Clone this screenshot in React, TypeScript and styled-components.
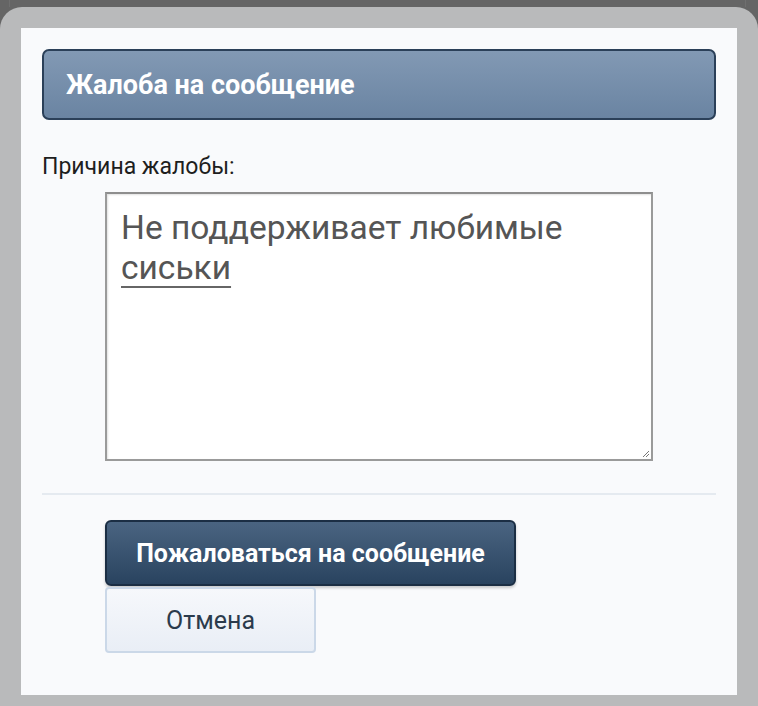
import { createGlobalStyle } from "styled-components";
import styled from "styled-components";

const Global = createGlobalStyle`
  html, body {
    margin: 0;
    padding: 0;
    background: #656565;
    font-family: Roboto, "Noto Sans", "Liberation Sans", sans-serif;
  }
  * { box-sizing: border-box; }
`;

const Page = styled.div`
  width: 758px;
  height: 706px;
  display: flex;
  flex-direction: column;
  overflow: hidden;
  background: #656565;
`;

const Behind = styled.div`
  height: 7px;
  flex: none;
  border-left: 1px solid #6f6f6f;
  border-right: 1px solid #6f6f6f;
  margin: 0 12px 0 9px;
`;

const Frame = styled.div`
  flex: 1;
  background: #b9babb;
  border-radius: 22px 22px 0 0;
  padding: 21px 21px 11px 21px;
  display: flex;
`;

const Panel = styled.div`
  flex: 1;
  background: #f9fafc;
  padding: 21px 21px 0 21px;
  display: flex;
  flex-direction: column;
`;

const Header = styled.div`
  height: 71px;
  flex: none;
  border: 2px solid #2b4059;
  border-radius: 7px;
  background: linear-gradient(#8299b4, #6a84a2);
  display: flex;
  align-items: center;
  padding-left: 22px;
`;

const Title = styled.h2`
  margin: 0;
  color: #fff;
  font-size: 27px;
  font-weight: 700;
`;

const Label = styled.div`
  margin-top: 33px;
  font-size: 23px;
  line-height: 28px;
  color: #1e1e1e;
`;

const Field = styled.div`
  position: relative;
  flex: none;
  margin: 11px 0 0 63px;
  width: 548px;
  height: 269px;
  border: 2px solid #9a9a9a;
  border-top-color: #8e8e8e;
  box-shadow: inset 1px 1px 2px rgba(0, 0, 0, 0.12);
  background: #fff;
  padding: 14px 14px;
  font-size: 33.5px;
  line-height: 40px;
  color: #555;
`;

const Misspelled = styled.span`
  text-decoration: underline;
  text-decoration-color: #666;
  text-decoration-thickness: 2px;
  text-underline-offset: 7px;
`;

const Grip = styled.svg`
  position: absolute;
  right: 1px;
  bottom: 1px;
  width: 9px;
  height: 9px;
`;

const Divider = styled.hr`
  margin: 32px 0 0 0;
  border: 0;
  border-top: 2px solid #e5eaf0;
`;

const Actions = styled.div`
  margin: 25px 0 0 63px;
  display: flex;
  flex-direction: column;
  align-items: flex-start;
  gap: 1px;
`;

const Button = styled.button<{ $primary?: boolean }>`
  flex: none;
  height: 66px;
  font-family: Roboto, "Noto Sans", sans-serif;
  font-size: 25px;
  cursor: pointer;
  border-radius: ${({ $primary }) => ($primary ? "6px" : "4px")};
  padding: 0;
  width: ${({ $primary }) => ($primary ? "411px" : "211px")};
  font-weight: ${({ $primary }) => ($primary ? 700 : 400)};
  color: ${({ $primary }) => ($primary ? "#fff" : "#2b3b4c")};
  background: ${({ $primary }) =>
    $primary
      ? "linear-gradient(#4a6481, #29435f)"
      : "linear-gradient(#f6f8fb, #e9eef6)"};
  border: ${({ $primary }) =>
    $primary ? "2px solid #1b2e44" : "2px solid #cbd8e8"};
  box-shadow: ${({ $primary }) =>
    $primary ? "0 2px 3px rgba(0,0,0,0.2)" : "none"};
`;

export default function App() {
  return (
    <>
      <Global />
      <Page>
        <Behind />
        <Frame>
          <Panel>
            <Header>
              <Title>Жалоба на сообщение</Title>
            </Header>
            <Label>Причина жалобы:</Label>
            <Field role="textbox" aria-multiline="true">
              Не поддерживает любимые <Misspelled>сиськи</Misspelled>
              <Grip viewBox="0 0 9 9">
                <path d="M8 2 L2 8 M8 5 L5 8" stroke="#777" strokeWidth="1" />
              </Grip>
            </Field>
            <Divider />
            <Actions>
              <Button $primary>Пожаловаться на сообщение</Button>
              <Button>Отмена</Button>
            </Actions>
          </Panel>
        </Frame>
      </Page>
    </>
  );
}
